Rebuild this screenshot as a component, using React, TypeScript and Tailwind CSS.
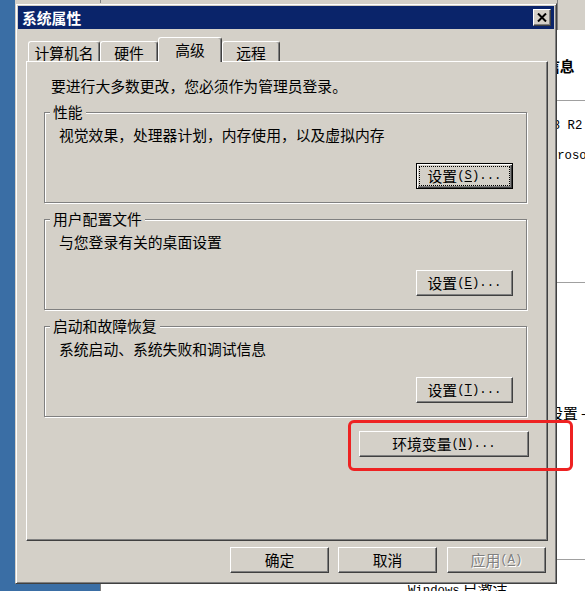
import React from "react";

const bevel =
  "border border-t-white border-l-white border-b-[#404040] border-r-[#404040] shadow-[inset_-1px_-1px_0_#808080]";

function M({ children }: { children: React.ReactNode }) {
  return <span className="font-['Liberation_Mono',monospace] text-[12.3px]">{children}</span>;
}

function U({ children }: { children: React.ReactNode }) {
  return <span className="underline underline-offset-[2px]">{children}</span>;
}

function Btn({
  className,
  children,
  focused,
  disabled,
}: {
  className: string;
  children: React.ReactNode;
  focused?: boolean;
  disabled?: boolean;
}) {
  if (focused) {
    return (
      <div
        className={
          "flex h-[26px] shrink-0 border border-black bg-[#d4d0c8] p-[2px] shadow-[inset_1px_1px_0_#fff,inset_-1px_-1px_0_#404040,inset_-2px_-2px_0_#808080] " +
          className
        }
      >
        <div className="flex flex-1 items-center justify-center border border-dotted border-black text-[14.8px] leading-[16px]">
          {children}
        </div>
      </div>
    );
  }
  return (
    <div
      className={
        "flex h-[26px] shrink-0 items-center justify-center bg-[#d4d0c8] text-[14.8px] leading-[16px] " +
        bevel +
        " " +
        (disabled ? "text-[#808080] [text-shadow:1px_1px_0_#fff] " : "") +
        className
      }
    >
      {children}
    </div>
  );
}

function Group({
  title,
  text,
  className,
  button,
}: {
  title: string;
  text: string;
  className: string;
  button: React.ReactNode;
}) {
  return (
    <div
      className={
        "relative ml-[17px] flex h-[91px] w-[483px] flex-col border border-[#808080] shadow-[1px_1px_0_#fff,inset_1px_1px_0_#fff] " +
        className
      }
    >
      <span className="absolute left-[5px] top-[-9px] bg-[#d4d0c8] px-[3px] text-[14.8px] leading-[16px]">
        {title}
      </span>
      <div className="pl-[14px] pt-[14px] text-[14.8px] leading-[16px]">{text}</div>
      <div className="mb-[13px] mr-[13px] mt-auto self-end">{button}</div>
    </div>
  );
}

function Tab({ className, label, selected }: { className: string; label: string; selected?: boolean }) {
  return (
    <div
      className={
        "flex items-center justify-center rounded-tl-[3px] rounded-tr-[3px] border-l border-r border-t border-l-white border-r-[#404040] border-t-white bg-[#d4d0c8] text-[14.8px] leading-[16px] shadow-[inset_-1px_0_0_#808080] " +
        (selected ? "relative z-10 -mb-px h-[25px] " : "h-[20px] pt-[2px] ") +
        className
      }
    >
      {label}
    </div>
  );
}

export default function App() {
  return (
    <div className="relative h-[591px] w-[585px] overflow-hidden bg-[#3a6ea5] font-['Noto_Sans_CJK_SC',sans-serif] text-black">
      {/* windows behind the dialog */}
      <div className="absolute left-[15px] top-0 h-[10px] w-[86px] bg-[#d4d0c8]" />
      <div className="absolute bottom-0 left-[100px] right-0 top-0 flex flex-col border-l border-[#808080] bg-white">
        <div className="h-[30px] shrink-0 bg-[#d4d0c8]" />
      </div>
      <div className="absolute left-[557px] top-0 h-[30px] w-px bg-[#808080]" />
      <div className="absolute left-[556px] right-0 top-[100px] h-px bg-[#a0a0a0]" />
      <div className="absolute left-[556px] right-0 top-[282px] h-px bg-[#a0a0a0]" />
      <div className="absolute left-[556px] right-0 top-[559px] h-px bg-[#a0a0a0]" />
      <div className="absolute left-[545px] top-[58px] whitespace-nowrap text-[14.8px] font-bold leading-[16px]">信息</div>
      <div className="absolute left-[420px] top-[114px] whitespace-nowrap leading-[16px]">
        <M>Windows Server 2008 R2 Enterprise</M>
      </div>
      <div className="absolute left-[535px] top-[144px] whitespace-nowrap leading-[16px]">
        <M>Microsoft Corporation</M>
      </div>
      <div className="absolute left-[489px] top-[405px] whitespace-nowrap text-[14.8px] leading-[16px]">
        高级系统设置 -
      </div>
      <div className="absolute left-[408px] top-[580px] whitespace-nowrap text-[14.8px] leading-[16px]">
        <M>Windows</M> 已激活
      </div>

      {/* dialog */}
      <div className="absolute left-[15px] top-[3px] flex h-[581px] w-[542px] flex-col border border-b-[#404040] border-l-[#d4d0c8] border-r-[#404040] border-t-[#d4d0c8] bg-[#d4d0c8] p-[2px] shadow-[inset_1px_1px_0_#fff,inset_-1px_-1px_0_#808080]">
        <div className="flex h-[23px] shrink-0 items-center bg-[#0a246a] pl-[4px] pr-[3px]">
          <span className="text-[14.8px] font-bold leading-[16px] text-white">系统属性</span>
          <div className={"ml-auto flex h-[17px] w-[18px] items-center justify-center bg-[#d4d0c8] " + bevel}>
            <svg width="10" height="9" viewBox="0 0 10 9">
              <path d="M1 0.5 L9 8.5 M9 0.5 L1 8.5" stroke="#000" strokeWidth="2" />
            </svg>
          </div>
        </div>

        <div className="flex flex-1 flex-col pb-[8px] pl-[8px] pr-[6px] pt-[8px]">
          <div className="flex h-[24px] shrink-0 items-end pl-[2px]">
            <Tab className="w-[72px]" label="计算机名" />
            <Tab className="w-[58px]" label="硬件" />
            <Tab className="w-[64px]" label="高级" selected />
            <Tab className="w-[58px]" label="远程" />
          </div>

          <div className={"flex h-[480px] shrink-0 flex-col bg-[#d4d0c8] " + bevel}>
            <div className="ml-[24px] mt-[16px] text-[14.8px] leading-[16px]">
              要进行大多数更改，您必须作为管理员登录。
            </div>
            <Group
              className="mt-[18px]"
              title="性能"
              text="视觉效果，处理器计划，内存使用，以及虚拟内存"
              button={
                <Btn className="w-[97px]" focused>
                  设置
                  <M>
                    (<U>S</U>)...
                  </M>
                </Btn>
              }
            />
            <Group
              className="mt-[16px]"
              title="用户配置文件"
              text="与您登录有关的桌面设置"
              button={
                <Btn className="w-[97px]">
                  设置
                  <M>
                    (<U>E</U>)...
                  </M>
                </Btn>
              }
            />
            <Group
              className="mt-[16px]"
              title="启动和故障恢复"
              text="系统启动、系统失败和调试信息"
              button={
                <Btn className="w-[97px]">
                  设置
                  <M>
                    (<U>T</U>)...
                  </M>
                </Btn>
              }
            />
            <div className="mr-[18px] mt-[14px] self-end">
              <Btn className="w-[170px]">
                环境变量
                <M>
                  (<U>N</U>)...
                </M>
              </Btn>
            </div>
          </div>

          <div className="mt-[6px] flex justify-end pr-[2px]">
            <Btn className="w-[99px]">确定</Btn>
            <Btn className="ml-[9px] w-[99px]">取消</Btn>
            <Btn className="ml-[10px] w-[99px]" disabled>
              应用
              <M>
                (<U>A</U>)
              </M>
            </Btn>
          </div>
        </div>
      </div>

      {/* red highlight annotation */}
      <div className="absolute left-[348px] top-[420px] h-[51px] w-[225px] rounded-[6px] border-[3px] border-[#ee2222]" />
    </div>
  );
}
